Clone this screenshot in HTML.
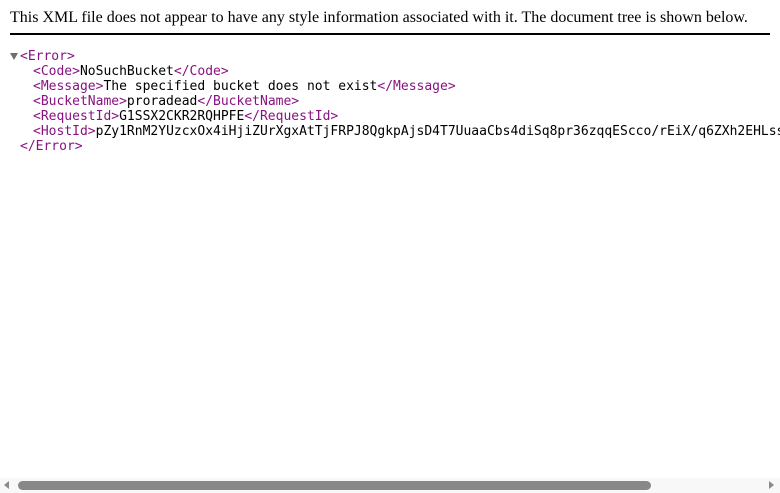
<!DOCTYPE html>
<html><head><style>
html,body{margin:0;padding:0;width:780px;height:493px;overflow:hidden;background:#fff;}
.hdr{position:absolute;left:10px;top:8px;width:760px;font:16px "Liberation Serif",serif;color:#000;line-height:20px;border-bottom:2px solid #000;padding-bottom:5px;white-space:nowrap;}
.wrap{position:absolute;left:0;top:0;width:780px;height:478px;overflow:hidden;}
.tree{position:absolute;left:0;top:49px;width:780px;height:120px;font:13px "DejaVu Sans Mono",monospace;line-height:15px;white-space:nowrap;color:#000;}
.t{color:#881280;}
.l{position:absolute;}
.tri{position:absolute;left:10px;top:4px;width:0;height:0;border-left:4px solid transparent;border-right:4px solid transparent;border-top:7px solid #6e6e6e;}
.sb{position:absolute;left:0;top:478px;width:780px;height:15px;background:#f8f8f8;}
.th{position:absolute;left:18px;top:3px;width:633px;height:9px;border-radius:5px;background:#888;}
.al{position:absolute;left:4px;top:3px;border-top:4px solid transparent;border-bottom:4px solid transparent;border-right:5px solid #8a8a8a;}
.ar{position:absolute;left:769px;top:3px;border-top:4px solid transparent;border-bottom:4px solid transparent;border-left:5px solid #8a8a8a;}
</style></head><body>
<div class="hdr">This XML file does not appear to have any style information associated with it. The document tree is shown below.</div>
<div class="wrap"><div class="tree">
<div class="tri"></div>
<div class="l" style="left:20px;top:0"><span class="t">&lt;Error&gt;</span></div>
<div class="l" style="left:33px;top:15px"><span class="t">&lt;Code&gt;</span>NoSuchBucket<span class="t">&lt;/Code&gt;</span></div>
<div class="l" style="left:33px;top:30px"><span class="t">&lt;Message&gt;</span>The specified bucket does not exist<span class="t">&lt;/Message&gt;</span></div>
<div class="l" style="left:33px;top:45px"><span class="t">&lt;BucketName&gt;</span>proradead<span class="t">&lt;/BucketName&gt;</span></div>
<div class="l" style="left:33px;top:60px"><span class="t">&lt;RequestId&gt;</span>G1SSX2CKR2RQHPFE<span class="t">&lt;/RequestId&gt;</span></div>
<div class="l" style="left:33px;top:75px"><span class="t">&lt;HostId&gt;</span>pZy1RnM2YUzcxOx4iHjiZUrXgxAtTjFRPJ8QgkpAjsD4T7UuaaCbs4diSq8pr36zqqEScco/rEiX/q6ZXh2EHLss=<span class="t">&lt;/HostId&gt;</span></div>
<div class="l" style="left:20px;top:90px"><span class="t">&lt;/Error&gt;</span></div>
</div></div>
<div class="sb"><div class="al"></div><div class="th"></div><div class="ar"></div></div>
</body></html>
